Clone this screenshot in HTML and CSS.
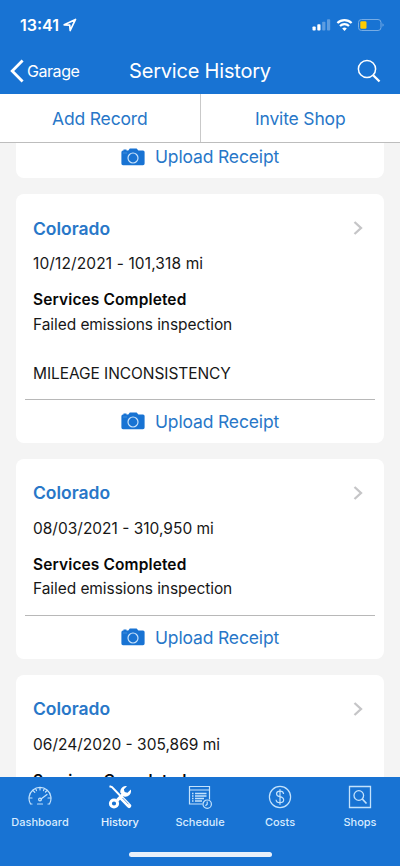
FILE: index.html
```html
<!DOCTYPE html>
<html lang="en">
<head>
<meta charset="utf-8">
<meta name="viewport" content="width=device-width, initial-scale=1">
<title>Service History</title>
<link rel="stylesheet" href="styles.css">
</head>
<body>
<svg class="defs" aria-hidden="true">
  <symbol id="camera" viewBox="0 0 24 18">
    <path fill="#1873d3" d="M2.5 2.6V1.4h3v1h1.8L8.8.5h6.8L17.4 2.4H22a1.6 1.6 0 0 1 1.6 1.6v11.6a1.6 1.6 0 0 1-1.6 1.6H2A1.6 1.6 0 0 1 .4 15.600V4.200A1.600 1.600 0 0 1 2 2.600z"/>
    <circle cx="12" cy="10" r="5" fill="none" stroke="#c9e2fa" stroke-width="1.200"/>
    <path d="M2 5h4" stroke="#4d95df" stroke-width=".8"/>
  </symbol>
  <symbol id="chevron" viewBox="0 0 10 14">
    <path d="M1.500 1 8 7 1.500 13" fill="none" stroke="#c5c5c7" stroke-width="2.300"/>
  </symbol>
</svg>
<div class="screen">
  <header class="header">
    <div class="status">
      <div class="clock">13:41
        <svg width="14" height="14" viewBox="0 0 14 14"><path d="M1.200 6.800 12.500 1.400 7.200 12.500 6.700 7.200z" fill="none" stroke="#fff" stroke-width="1.700" stroke-linejoin="round"/></svg>
      </div>
      <svg width="74" height="14" viewBox="0 0 74 14">
        <g fill="#fff"><rect x="1.500" y="8.500" width="3.200" height="4" rx=".8"/><rect x="6.300" y="6.300" width="3.200" height="6.200" rx=".8"/><g opacity=".3"><rect x="11.200" y="3.800" width="3.200" height="8.700" rx=".8"/><rect x="16" y="1.200" width="3.200" height="11.300" rx=".8"/></g></g>
        <g fill="none" stroke="#fff" stroke-width="2.200"><path d="M26.400 5a10.200 10.200 0 0 1 14.200 0M29 8a6.400 6.400 0 0 1 9 0"/></g>
        <path fill="#fff" d="M33.500 13 31.200 10.500a3.500 3.500 0 0 1 4.600 0z"/>
        <rect x="47.500" y="1.500" width="22.500" height="11" rx="3" fill="none" stroke="#76ace5" stroke-width="1"/>
        <path d="M71.500 5.200v3.600a2 2 0 0 0 0-3.600z" fill="#76ace5"/>
        <rect x="49.300" y="3.200" width="6.200" height="7.600" rx="1.300" fill="#fc0"/>
      </svg>
    </div>
    <div class="nav">
      <div class="back">
        <svg width="14" height="24" viewBox="0 0 14 24"><path d="M12.600 1.500 2.200 12 12.600 22.500" fill="none" stroke="#fff" stroke-width="2.800"/></svg>
        <span>Garage</span>
      </div>
      <h1 class="title">Service History</h1>
      <svg class="search" width="24" height="24" viewBox="0 0 24 24" fill="none" stroke="#fff"><circle cx="10" cy="10" r="8.600" stroke-width="1.500"/><path d="m16.200 16.200 6.300 6.300" stroke-width="2.300"/></svg>
    </div>
  </header>
  <div class="actions"><div class="action"><span>Add Record</span></div><div class="action"><span>Invite Shop</span></div></div>
  <main class="list">
    <section class="card card-clipped">
      <div class="upload"><svg class="camera"><use href="#camera"/></svg><span>Upload Receipt</span></div>
    </section>
    <section class="card">
      <div class="card-body">
        <div class="card-title"><h2>Colorado</h2><svg class="chevron"><use href="#chevron"/></svg></div>
        <p class="date date-wide">10/12/2021 - 101,318 mi</p>
        <h3>Services Completed</h3>
        <p class="line">Failed emissions inspection</p>
        <p class="line note">MILEAGE INCONSISTENCY</p>
      </div>
      <div class="upload ruled"><svg class="camera"><use href="#camera"/></svg><span>Upload Receipt</span></div>
    </section>
    <section class="card">
      <div class="card-body">
        <div class="card-title"><h2>Colorado</h2><svg class="chevron"><use href="#chevron"/></svg></div>
        <p class="date">08/03/2021 - 310,950 mi</p>
        <h3>Services Completed</h3>
        <p class="line">Failed emissions inspection</p>
      </div>
      <div class="upload ruled"><svg class="camera"><use href="#camera"/></svg><span>Upload Receipt</span></div>
    </section>
    <section class="card">
      <div class="card-body">
        <div class="card-title"><h2>Colorado</h2><svg class="chevron"><use href="#chevron"/></svg></div>
        <p class="date">06/24/2020 - 305,869 mi</p>
        <h3>Services Completed</h3>
      </div>
    </section>
  </main>
  <footer class="footer">
    <nav class="tabs">
      <div class="tab">
        <svg class="tab-icon" viewBox="0 0 24 24" fill="none" stroke="#c3e2fc" stroke-width="1.200" stroke-linecap="round"><path d="M4 19H2.500a11 11 0 1 1 19 0H20M9.500 19h5M12 3v2M5.500 6l1.300 1.300M2 13h2M18.500 6l-1 1M20 13h2M8 4.300l.5 1.300M16 4.300l-.5 1.300M13 14l6-4.500"/><circle cx="12" cy="14.500" r="1.400"/></svg>
        <span>Dashboard</span>
      </div>
      <div class="tab active">
        <svg class="tab-icon" viewBox="0 0 24 24" fill="none" stroke="#fff"><path d="M9.200 15.300 17 7.500" stroke-width="3.200"/><path d="M22.800 4.600 19.500 7.700l-3-.6-.6-2.800L19 1.200a5.600 5.600 0 0 0-6.600 6.600L16 11.600a5.600 5.600 0 0 0 6.800-7z" fill="#fff" stroke="none"/><circle cx="6" cy="18.500" r="3.600" stroke-width="3"/><path d="M1.500 1.200 4 2l8.500 9" stroke-width="2"/><path d="m13.500 13 7.500 7.800" stroke-width="4.400" stroke-linecap="round"/><path d="m14.500 13 6 6.300" stroke="#1873d3" stroke-width=".7"/></svg>
        <span>History</span>
      </div>
      <div class="tab">
        <svg class="tab-icon" viewBox="0 0 24 24" fill="none" stroke="#c3e2fc" stroke-width="1.200"><path d="M14.500 19H1.500V1.500h20v13M1.500 5h20"/><path d="M4 8.500h1.500M7 8.500h11.500M4 11h1.500M7 11h11.500M4 13.500h1.500M7 13.500h9M4 16h1.500M7 16h7" stroke-width="1.300"/><circle cx="19.200" cy="19.200" r="4.200"/><path d="M19.200 16.500v2.800l-1.800 1.500"/></svg>
        <span>Schedule</span>
      </div>
      <div class="tab">
        <svg class="tab-icon" viewBox="0 0 24 24" fill="none" stroke="#c3e2fc" stroke-width="1.200"><circle cx="12" cy="12" r="10.600"/><path d="M15.600 9c-.2-1.800-1.500-2.800-3.500-2.800-4.600 0-4.800 4.700-.3 5.500 5.300 1 5 6-.0 6-2.200 0-3.600-1.100-3.700-3M12 4.300v15.400"/></svg>
        <span>Costs</span>
      </div>
      <div class="tab">
        <svg class="tab-icon" viewBox="0 0 24 24" fill="none" stroke="#c3e2fc" stroke-width="1.300"><path d="M1.500 1.500h21v21h-21z"/><circle cx="10.800" cy="10.500" r="4.800"/><path d="m14.300 14 4.200 4.500" stroke-width="1.700"/></svg>
        <span>Shops</span>
      </div>
    </nav>
    <div class="home-bar"></div>
  </footer>
</div>
</body>
</html>
```
FILE: styles.css
```css
* { box-sizing: border-box; }
body, h1, h2, h3, p { margin: 0; font-weight: 400; }
body { font-family: Inter, "Liberation Sans", sans-serif; background: #f4f4f4; color: #171717; }
svg { display: block; flex: none; }
.defs { display: none; }
.screen { width: 400px; height: 866px; display: flex; flex-direction: column; overflow: hidden; }

.header { height: 94px; flex: none; background: #1873d3; color: #fff; }
.status { height: 48px; padding: 1px 15px 0 20px; display: flex; align-items: center; justify-content: space-between; }
.clock { display: flex; align-items: center; gap: 4px; font-size: 16px; font-weight: 600; letter-spacing: 0; }
.nav { height: 46px; display: grid; grid-template-columns: 100px 200px 100px; align-items: center; }
.back { display: flex; align-items: center; gap: 3px; padding-left: 10px; font-size: 16px; letter-spacing: -.45px; }
.title { font-size: 20px; text-align: center; letter-spacing: -.2px; line-height: 46px; }
.search { justify-self: end; margin-right: 19px; }

.actions { height: 49px; flex: none; display: flex; background: #fff; border-bottom: 1px solid #bdbdbd; color: #2877c8; font-size: 17.5px; letter-spacing: -.17px; }
.action { flex: 1; display: flex; align-items: center; justify-content: center; }
.action + .action { border-left: 1px solid #c9c9c9; }

.list { flex: 1; min-height: 0; overflow: hidden; padding: 0 16px; display: flex; flex-direction: column; gap: 16px; }
.card { flex: none; background: #fff; border-radius: 8px; padding: 0 9px; }
.card-clipped { height: 35px; display: flex; flex-direction: column; justify-content: flex-end; border-radius: 0 0 8px 8px; }
.card-body { padding: 16px 8px 12.8px; }
.card-title { height: 36px; display: flex; align-items: center; justify-content: space-between; padding-right: 4px; }
h2 { color: #2877c8; font-size: 17.5px; font-weight: 600; letter-spacing: -.02px; }
.chevron { width: 10px; height: 14px; }
.date { height: 42px; line-height: 36px; font-size: 15.5px; }
.date-wide { letter-spacing: .12px; }
h3 { font-size: 15.5px; font-weight: 600; line-height: 24.5px; letter-spacing: .12px; color: #080808; }
.line { font-size: 15.5px; line-height: 24.5px; letter-spacing: -.07px; }
.note { margin-top: 24.5px; }
.upload { height: 43px; flex: none; display: flex; align-items: center; justify-content: center; gap: 10px; color: #2877c8; font-size: 17.5px; letter-spacing: -.15px; }
.ruled { height: 44px; border-top: 1px solid #b8b8b8; }
.camera { width: 24px; height: 18px; }

.footer { height: 89px; flex: none; background: #1873d3; color: #d7ebff; }
.tabs { display: flex; height: 74px; padding-top: 8px; }
.tab { flex: 1; display: flex; flex-direction: column; align-items: center; gap: 6px; font-size: 11px; font-weight: 500; line-height: 14px; }
.tab-icon { width: 24px; height: 24px; }
.active { color: #e7f4ff; }
.home-bar { width: 143px; height: 5px; margin: 1px auto 0; border-radius: 3px; background: #e9f0fa; }
```
